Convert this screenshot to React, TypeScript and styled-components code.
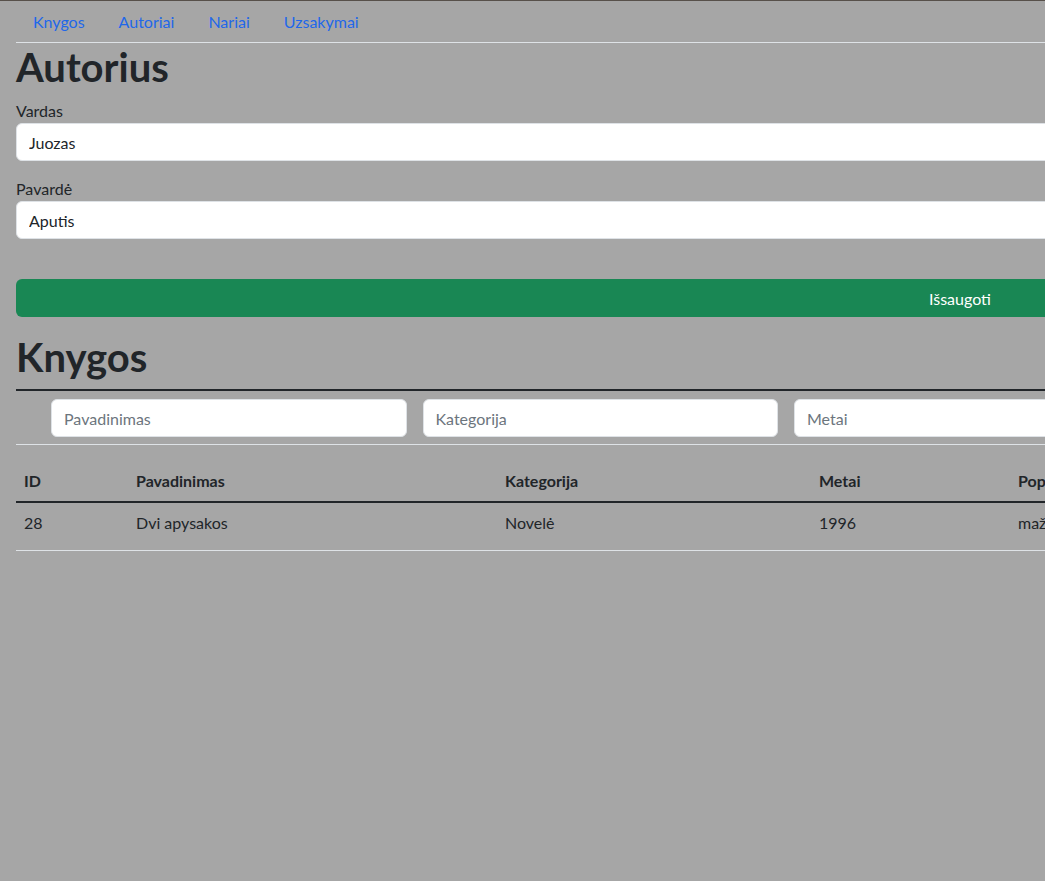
import React from "react";
import styled, { createGlobalStyle } from "styled-components";

const GlobalStyle = createGlobalStyle`
  html, body {
    margin: 0;
    padding: 0;
    overflow: hidden;
  }
  body {
    background: #a6a6a6;
    border-top: 1px solid #57504a;
    font-family: Lato, "Liberation Sans", sans-serif;
    font-size: 16px;
    line-height: 1.5;
    color: #212529;
  }
  * { box-sizing: border-box; }
`;

const Page = styled.div`
  width: 1920px;
  padding: 0 16px;
`;

const Nav = styled.ul`
  display: flex;
  list-style: none;
  margin: 0;
  padding: 1px 0 0;
  border-bottom: 1px solid #dee2e6;
`;

const NavLink = styled.a`
  display: block;
  padding: 8px 17px;
  line-height: 24px;
  color: #1f68ea;
  text-decoration: none;
  font-size: 16px;
`;

const Heading = styled.h1<{ $top?: number }>`
  margin: ${(p) => p.$top ?? 0}px 0 8px;
  font-size: 40px;
  font-weight: 700;
  line-height: 48px;
  color: #212529;
`;

const Field = styled.div`
  margin-bottom: 16px;
`;

const Label = styled.label`
  display: block;
  line-height: 24px;
  font-size: 16px;
`;

const Input = styled.input`
  display: block;
  width: 100%;
  height: 38px;
  padding: 6px 12px;
  font-family: inherit;
  font-size: 16px;
  color: #212529;
  background: #fff;
  border: 1px solid #dee2e6;
  border-radius: 6px;
  outline: none;
  &::placeholder {
    color: #6c757d;
  }
`;

const SaveButton = styled.button`
  display: block;
  width: 100%;
  height: 38px;
  margin-top: 40px;
  background: #198754;
  color: #fff;
  border: none;
  border-radius: 6px;
  font-family: inherit;
  font-size: 16px;
`;

const FilterRow = styled.div`
  display: flex;
  gap: 16px;
  padding: 8px 8px 7px 35px;
  border-top: 2px solid #212529;
  border-bottom: 1px solid #dee2e6;
`;

const FilterInput = styled(Input)`
  flex: 0 0 355.5px;
  width: 355.5px;
`;

const Table = styled.table`
  width: 1888px;
  border-collapse: separate;
  border-spacing: 0;
  table-layout: fixed;
`;

const Th = styled.th`
  text-align: left;
  font-weight: 700;
  padding: 24px 8px 8px;
  line-height: 24px;
  vertical-align: bottom;
  border-bottom: 2px solid #212529;
  white-space: nowrap;
  overflow: hidden;
`;

const Td = styled.td`
  padding: 8px 8px 15px;
  line-height: 24px;
  vertical-align: top;
  border-bottom: 1px solid #dee2e6;
  white-space: nowrap;
  overflow: hidden;
`;

const columns = [
  { key: "id", label: "ID", width: 112 },
  { key: "title", label: "Pavadinimas", width: 369 },
  { key: "cat", label: "Kategorija", width: 314 },
  { key: "year", label: "Metai", width: 199 },
  { key: "pop", label: "Populiarumas", width: 300 },
  { key: "act", label: "", width: 594 },
];

const rows = [
  { id: "28", title: "Dvi apysakos", cat: "Novelė", year: "1996", pop: "mažas", act: "" },
];

export default function App() {
  return (
    <>
      <GlobalStyle />
      <Page>
        <Nav>
          {["Knygos", "Autoriai", "Nariai", "Uzsakymai"].map((l) => (
            <li key={l}>
              <NavLink href="#">{l}</NavLink>
            </li>
          ))}
        </Nav>
        <Heading>Autorius</Heading>
        <Field>
          <Label>Vardas</Label>
          <Input defaultValue="Juozas" />
        </Field>
        <Field>
          <Label>Pavardė</Label>
          <Input defaultValue="Aputis" />
        </Field>
        <SaveButton>Išsaugoti</SaveButton>
        <Heading $top={16}>Knygos</Heading>
        <FilterRow>
          <FilterInput placeholder="Pavadinimas" />
          <FilterInput placeholder="Kategorija" />
          <FilterInput placeholder="Metai" />
          <FilterInput placeholder="Populiarumas" />
          <FilterInput placeholder="" />
        </FilterRow>
        <Table>
          <colgroup>
            {columns.map((c) => (
              <col key={c.key} style={{ width: c.width }} />
            ))}
          </colgroup>
          <thead>
            <tr>
              {columns.map((c) => (
                <Th key={c.key}>{c.label}</Th>
              ))}
            </tr>
          </thead>
          <tbody>
            {rows.map((r) => (
              <tr key={r.id}>
                {columns.map((c) => (
                  <Td key={c.key}>{(r as Record<string, string>)[c.key]}</Td>
                ))}
              </tr>
            ))}
          </tbody>
        </Table>
      </Page>
    </>
  );
}
